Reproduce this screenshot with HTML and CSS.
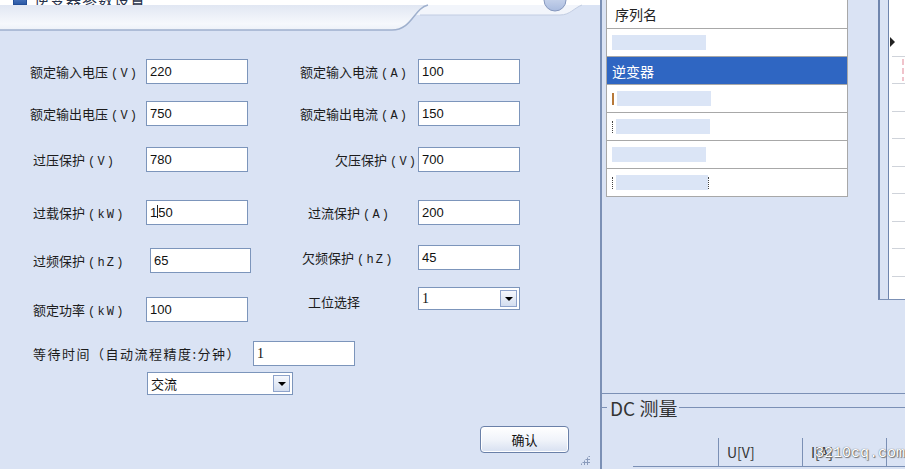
FILE: index.html
```html
<!DOCTYPE html>
<html>
	<head>
		<meta charset="utf-8" />
		<title>逆变器参数设置</title>
		<link rel="stylesheet" href="styles.css">
	</head>
	<body>
		<div class="screen">
			<div class="dialog">
				<div class="titlebar">
					<svg class="chrome" width="600" height="31" viewBox="0 0 600 31">
						<defs>
							<linearGradient id="tabFill" x1="0" y1="0" x2="0" y2="1">
								<stop offset="0" stop-color="#e1e7f3" />
								<stop offset="0.75" stop-color="#f6f8fc" />
								<stop offset="1" stop-color="#edf1f8" />
							</linearGradient>
							<linearGradient id="closeFill" x1="0" y1="0" x2="0" y2="1">
								<stop offset="0" stop-color="#dde5f4" />
								<stop offset="1" stop-color="#a9bbdf" />
							</linearGradient>
						</defs>
						<rect width="600" height="31" fill="#dae3f4" />
						<rect width="600" height="5" fill="#ffffff" />
						<!-- right band behind the tab -->
						<path d="M410 5 H582 C574 8 570 15 560 15 H410 Z" fill="#f2f5fb" />
						<path d="M420 15 H560 C570 15 574 8 582 5" fill="none" stroke="#c2cde2" />
						<!-- raised tab -->
						<path d="M0 5 H428 C414 8 412 30 392 30 H0 Z" fill="url(#tabFill)" />
						<path d="M428 5 C414 8 412 30 392 30 H0" fill="none" stroke="#9fb0cd" stroke-width="1.5" />
						<circle cx="555" cy="0" r="11" fill="url(#closeFill)" stroke="#8698bd" />
					</svg>
					<div class="caption">
						<span class="cap-icon"></span>
						<span class="cap-text">逆变器参数设置</span>
					</div>
				</div>

				<div class="form">
					<div class="row r1">
						<div class="cell left">
							<label class="lbl out">额定输入电压<span class="unit">(V)</span></label>
							<div class="field">220</div>
						</div>
						<div class="cell right">
							<label class="lbl">额定输入电流<span class="unit">(A)</span></label>
							<div class="field">100</div>
						</div>
					</div>

					<div class="row r2">
						<div class="cell left">
							<label class="lbl out">额定输出电压<span class="unit">(V)</span></label>
							<div class="field">750</div>
						</div>
						<div class="cell right">
							<label class="lbl">额定输出电流<span class="unit">(A)</span></label>
							<div class="field">150</div>
						</div>
					</div>

					<div class="row r3">
						<div class="cell left">
							<label class="lbl">过压保护<span class="unit">(V)</span></label>
							<div class="field">780</div>
						</div>
						<div class="cell right">
							<label class="lbl far">欠压保护<span class="unit">(V)</span></label>
							<div class="field">700</div>
						</div>
					</div>

					<div class="row r4">
						<div class="cell left">
							<label class="lbl">过载保护<span class="unit">(kW)</span></label>
							<div class="field">1<span class="caret"></span>50</div>
						</div>
						<div class="cell right">
							<label class="lbl mid">过流保护<span class="unit">(A)</span></label>
							<div class="field">200</div>
						</div>
					</div>

					<div class="row r5">
						<div class="cell left drop3">
							<label class="lbl">过频保护<span class="unit">(hZ)</span></label>
							<div class="field nudge">65</div>
						</div>
						<div class="cell right">
							<label class="lbl near">欠频保护<span class="unit">(hZ)</span></label>
							<div class="field">45</div>
						</div>
					</div>

					<div class="row r6">
						<div class="cell left drop11">
							<label class="lbl">额定功率<span class="unit">(kW)</span></label>
							<div class="field">100</div>
						</div>
						<div class="cell right">
							<label class="lbl mid low">工位选择</label>
							<div class="combo">
								<span class="combo-value serif">1</span>
								<span class="combo-btn"></span>
							</div>
						</div>
					</div>

					<div class="row r7">
						<div class="cell">
							<label class="lbl long">等待时间（自动流程精度:分钟）</label>
							<div class="field serif">1</div>
						</div>
					</div>

					<div class="row r8">
						<div class="combo wide">
							<span class="combo-value">交流</span>
							<span class="combo-btn"></span>
						</div>
					</div>
				</div>

				<div class="footer">
					<button class="btn">确认</button>
					<span class="grip"></span>
				</div>
			</div>

			<div class="side">
				<div class="side-top">
					<div class="list">
						<div class="item head">序列名</div>
						<div class="item"><span class="mask"></span></div>
						<div class="item sel">逆变器</div>
						<div class="item"><span class="frag orange"></span><span class="mask"></span></div>
						<div class="item"><span class="frag"></span><span class="mask"></span></div>
						<div class="item"><span class="mask"></span></div>
						<div class="item"><span class="frag"></span><span class="mask long-mask"></span><span class="frag"></span></div>
					</div>
					<div class="frame">
						<div class="chart">
							<div class="grow first"><span class="arrow"></span></div>
							<div class="grow"><span class="pink"></span></div>
							<div class="grow"></div>
							<div class="grow"></div>
							<div class="grow"></div>
							<div class="grow"></div>
							<div class="grow"></div>
							<div class="grow"></div>
							<div class="grow"></div>
						</div>
					</div>
				</div>
				<div class="side-mid"></div>
				<div class="dc">
					<div class="legend">
						<span class="tick"></span>
						<span class="legend-text">DC 测量</span>
						<span class="legend-line"></span>
					</div>
					<div class="dc-head">
						<div class="col first"></div>
						<div class="col">U[V]</div>
						<div class="col">I[A]</div>
						<div class="col"></div>
					</div>
				</div>
			</div>
		</div>
		<div class="watermark">3210cq.com</div>
	</body>
</html>
```

FILE: styles.css
```css
body {
	margin: 0;
	background-color: #fff;
	font-family: "Noto Sans CJK SC", sans-serif;
	overflow: hidden;
}

.screen {
	display: flex;
	height: 469px;
}

/* left dialog */
.dialog {
	width: 602px;
	flex-shrink: 0;
	box-sizing: border-box;
	background-color: #dae3f4;
	border-right: 2px solid #7b90b5;
	display: flex;
	flex-direction: column;
}

.titlebar {
	position: relative;
	height: 31px;
	flex-shrink: 0;
}

.chrome {
	position: absolute;
	left: 0;
	top: 0;
}

.caption {
	position: relative;
	height: 5px;
	overflow: hidden;
	display: flex;
	align-items: flex-end;
	gap: 7px;
	padding-left: 13px;
}

.cap-icon {
	width: 12px;
	height: 12px;
	background: linear-gradient(#6b95d8, #2d5aa6);
	border: 1px solid #234e98;
}

.cap-text {
	font-size: 15px;
	line-height: 15px;
	color: #27324a;
	margin-bottom: -2px;
	letter-spacing: 1px;
}

.form {
	display: flex;
	flex-direction: column;
}

.row {
	display: flex;
	align-items: flex-start;
}

.r1 { margin-top: 28px; }
.r2 { margin-top: 17px; }
.r3 { margin-top: 21px; }
.r4 { margin-top: 28px; }
.r5 { margin-top: 20px; }
.r6 { margin-top: 13px; }
.r7 { margin-top: 19px; }
.r8 { margin-top: 6px; }

.cell {
	display: flex;
	align-items: center;
}

.cell.left {
	width: 300px;
}

.drop3 {
	margin-top: 3px;
}

.drop11 {
	margin-top: 11px;
}

.lbl {
	flex-shrink: 0;
	box-sizing: border-box;
	white-space: nowrap;
	font-size: 13px;
	color: #1c1c1c;
}

.left .lbl {
	width: 146px;
	padding-left: 33px;
}

.left .lbl.out {
	padding-left: 30px;
}

.right .lbl {
	width: 118px;
	padding-left: 0;
}

.right .lbl.far { padding-left: 35px; }
.right .lbl.mid { padding-left: 8px; }
.right .lbl.near { padding-left: 2px; }
.right .lbl.low { padding-top: 6px; }

.lbl.long {
	width: 253px;
	padding-left: 33px;
	letter-spacing: 1.5px;
}

.unit {
	font-family: "Liberation Mono", monospace;
	font-size: 12px;
	letter-spacing: 2.2px;
	margin-left: 3px;
}

.field {
	width: 102px;
	height: 25px;
	box-sizing: border-box;
	border: 1px solid #7c95bb;
	background-color: #fff;
	padding: 0 3px;
	display: flex;
	align-items: center;
	font-family: "Liberation Sans", Arial, sans-serif;
	font-size: 13px;
	color: #111;
}

.field.nudge {
	margin-left: 4px;
	width: 101px;
}

.serif {
	font-family: "Liberation Serif", serif;
	font-size: 14px;
}

.caret {
	width: 1px;
	height: 13px;
	margin: -3px 0 0 0;
	background-color: #222;
}

.combo {
	width: 102px;
	height: 23px;
	box-sizing: border-box;
	border: 1px solid #7c95bb;
	background-color: #fff;
	display: flex;
	align-items: center;
	padding-left: 3px;
	font-size: 13px;
	color: #111;
}

.combo.wide {
	width: 146px;
	margin-left: 147px;
}

.combo-btn {
	margin-left: auto;
	margin-right: 2px;
	width: 17px;
	height: 17px;
	box-sizing: border-box;
	border: 1px solid #8ea3cb;
	background: linear-gradient(#f6f8fd, #d4deef);
	display: flex;
	align-items: center;
	justify-content: center;
}

.combo-btn::after {
	content: "";
	border-left: 4px solid transparent;
	border-right: 4px solid transparent;
	border-top: 4px solid #000;
}

.footer {
	margin-top: 31px;
	display: flex;
	justify-content: flex-end;
	align-items: flex-end;
	padding-right: 10px;
}

.btn {
	width: 89px;
	height: 27px;
	margin-bottom: 12px;
	border: 1px solid #6a80a8;
	border-radius: 4px;
	background: linear-gradient(#ffffff, #f1f4fa 50%, #d7e0f1);
	font-family: "Noto Sans CJK SC", sans-serif;
	font-size: 13px;
	color: #111;
	padding: 0;
	box-shadow: inset 0 0 0 1px #fff;
}

.grip {
	width: 10px;
	height: 10px;
	margin-left: 11px;
	background-image: radial-gradient(circle, #8a9bbb 1px, transparent 1.3px);
	background-size: 3px 3px;
	clip-path: polygon(100% 0, 100% 100%, 0 100%);
}

/* right panel */
.side {
	flex: 1;
	background-color: #dae3f4;
	display: flex;
	flex-direction: column;
	overflow: hidden;
}

.side-top {
	height: 301px;
	flex-shrink: 0;
	display: flex;
	align-items: flex-start;
}

.list {
	width: 242px;
	margin-left: 4px;
	box-sizing: border-box;
	border: 1px solid #a8a8a8;
	border-top: none;
	background-color: #fff;
}

.item {
	height: 27px;
	border-bottom: 1px solid #a8a8a8;
	display: flex;
	align-items: center;
	padding-left: 5px;
	font-size: 14px;
	color: #222;
}

.item:last-child {
	border-bottom: none;
}

.item.head {
	height: 28px;
	padding-left: 8px;
}

.item.sel {
	background-color: #2f66c2;
	color: #fff;
}

.mask {
	width: 94px;
	height: 15px;
	background-color: #dbe5f6;
}

.mask.long-mask {
	width: 92px;
}

.frag {
	width: 2px;
	height: 12px;
	margin-right: 1px;
	border-left: 1px dotted #444;
}

.frag.orange {
	border-left: 2px solid #b7793a;
}

.frame {
	margin-left: 30px;
	width: 27px;
	height: 300px;
	box-sizing: border-box;
	border-left: 2px solid #6f85ad;
	border-bottom: 1px solid #7b90b5;
	padding-left: 8px;
}

.chart {
	height: 100%;
	background-color: #fff;
	border-left: 1px solid #6f85ad;
	padding-top: 29px;
	box-sizing: border-box;
}

.grow {
	height: 26.5px;
	margin-left: 3px;
	border-bottom: 1px solid #cfd3da;
	display: flex;
	align-items: center;
}

.arrow {
	margin-left: -2px;
	border-top: 5px solid transparent;
	border-bottom: 5px solid transparent;
	border-left: 5px solid #222;
}

.pink {
	margin-left: 10px;
	width: 2px;
	height: 22px;
	background: repeating-linear-gradient(#f0c3cb 0 6px, transparent 6px 9px);
}

.side-mid {
	height: 92px;
	flex-shrink: 0;
	border-bottom: 1px solid #7b90b5;
}

.dc {
	flex: 1;
}

.legend {
	margin-top: 2px;
	height: 23px;
	display: flex;
	align-items: center;
}

.tick {
	width: 5px;
	height: 1px;
	background-color: #7b90b5;
}

.legend-text {
	margin: 0 2px 0 3px;
	font-size: 19px;
	color: #333;
	white-space: nowrap;
}

.legend-line {
	flex: 1;
	height: 1px;
	background-color: #7b90b5;
}

.dc-head {
	margin-top: 19px;
	margin-left: 31px;
	display: flex;
	height: 28px;
	border-bottom: 1px solid #7b90b5;
}

.col {
	width: 84px;
	flex-shrink: 0;
	border-left: 1px solid #7b90b5;
	padding-left: 8px;
	box-sizing: border-box;
	font-size: 14px;
	color: #333;
	display: flex;
	align-items: center;
}

.col.first {
	width: 85px;
	border-left: none;
}

.watermark {
	position: absolute;
	left: 815px;
	top: 445px;
	font-family: "Liberation Mono", monospace;
	font-size: 15px;
	color: #fff;
	text-shadow: 0 0 1px #444, 1px 1px 1px #777;
	white-space: nowrap;
}
```
